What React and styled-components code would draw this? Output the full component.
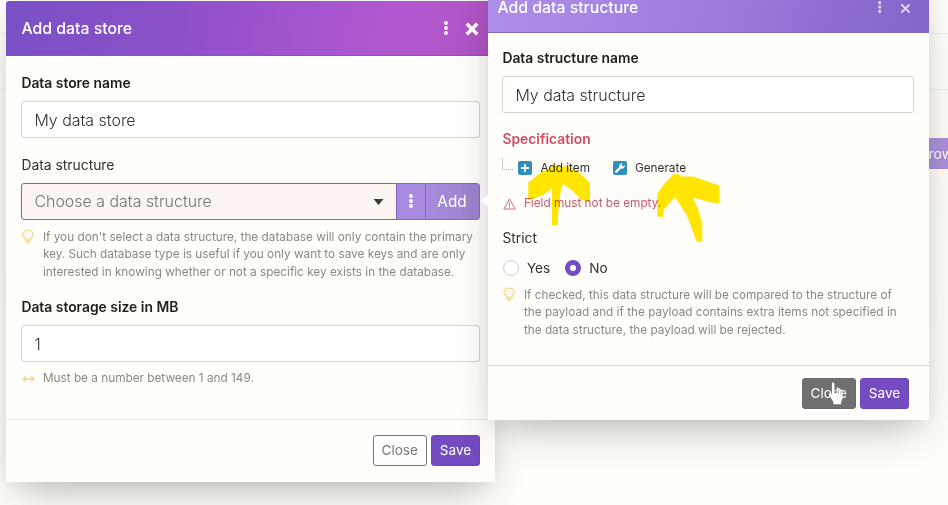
import React from "react";
import styled, { createGlobalStyle, css } from "styled-components";

const GlobalStyle = createGlobalStyle`
  * { box-sizing: border-box; }
  body { margin: 0; background: #fffefb; }
  body, button, input { font-family: Inter, "Liberation Sans", sans-serif; }
`;

const Desktop = styled.main`
  position: relative;
  width: 948px;
  height: 505px;
  overflow: hidden;
  background: #fffefb;
  color: #33312f;
`;

const Backdrop = styled.div`
  display: grid;
  grid-template-rows: 34px 56px 1fr;
  height: 100%;
`;

const BackdropBand = styled.div`
  border-bottom: 1px solid #efeeeb;
`;

const BackdropPage = styled.div`
  display: flex;
  justify-content: flex-end;
  align-items: flex-start;
  padding-top: 48px;
  background: linear-gradient(#fefbf8, #fffefb 390px);
`;

const BrowseButton = styled.button`
  width: 32px;
  height: 31px;
  padding: 0 0 0 12.5px;
  border: 0;
  background: #a98fd9;
  color: #fff;
  font-size: 14px;
  line-height: 31px;
  text-align: left;
`;

/* Dialogs float over the page like windows. */
const Dialog = styled.section`
  position: absolute;
  left: ${(p) => p.$x}px;
  top: ${(p) => p.$y}px;
  width: ${(p) => p.$w}px;
  height: ${(p) => p.$h}px;
  display: flex;
  flex-direction: column;
  border-radius: 3px 3px 0 0;
  background: #fffefb;
  box-shadow: 0 22px 40px -14px rgba(60, 56, 50, 0.3), 0 4px 24px rgba(60, 56, 50, 0.1);
`;

const DialogHeader = styled.header`
  flex: none;
  height: 55px;
  display: flex;
  align-items: center;
  gap: ${(p) => (p.$faded ? 18 : 14)}px;
  padding: ${(p) => (p.$faded ? "6px 18px 0 9.500px" : "1.500px 18px 0 15.500px")};
  border-radius: 3px 3px 0 0;
  border-bottom: 1px solid ${(p) => (p.$faded ? "#866ab8" : "#9150b8")};
  background: ${(p) =>
    p.$faded
      ? "linear-gradient(100deg, #ad8ee9 0%, #a080df 45%, #8263c8 100%)"
      : "linear-gradient(100deg, #7950c5 0%, #8c50c8 34%, #a554cf 62%, #b358cf 82%, #ae52c2 100%)"};
  color: ${(p) => (p.$faded ? "#e3d8f7" : "#fff")};
`;

const DialogTitle = styled.h2`
  flex: 1;
  margin: 0;
  color: #fff;
  font-size: 15.8px;
  font-weight: 500;
  line-height: 22px;
`;

const HeaderActions = styled.div`
  width: ${(p) => p.$w}px;
  display: flex;
  align-items: center;
  justify-content: space-between;
  padding-left: 3px;
  margin-right: ${(p) => p.$shift}px;
`;

const HeaderDots = styled.span`
  display: flex;
  margin-top: -2px;
`;

const DialogBody = styled.div`
  flex: 1;
  padding: ${(p) => p.$pad};
`;

const DialogFooter = styled.footer`
  flex: none;
  height: ${(p) => p.$h}px;
  display: flex;
  justify-content: flex-end;
  gap: 4px;
  padding: ${(p) => p.$pad};
  border-top: 1px solid ${(p) => p.$line};
`;

const Label = styled.div`
  height: 18px;
  margin-bottom: ${(p) => p.$gap ?? 9}px;
  color: ${(p) => (p.$error ? "#d14e63" : p.$strong ? "#22201e" : "#33312f")};
  font-size: 13.87px;
  font-weight: ${(p) => (p.$strong ? 600 : 400)};
  line-height: 18px;
`;

const fieldBox = css`
  height: 37px;
  font-size: 15.95px;
  font-weight: 300;
  line-height: 35px;
`;

const TextInput = styled.input`
  ${fieldBox}
  display: block;
  width: 100%;
  margin-bottom: ${(p) => p.$gap}px;
  padding: 1px 12px 0;
  border: 1px solid #d8d3cd;
  border-radius: 3px;
  background: #fff;
  color: #33312f;
  outline: none;
`;

const SelectGroup = styled.div`
  display: flex;
  margin-bottom: 9px;
`;

const SelectBox = styled.div`
  ${fieldBox}
  flex: 1;
  display: flex;
  align-items: center;
  justify-content: space-between;
  padding: 1px 12px 0 12px;
  border: 1.5px solid #8260ba;
  border-radius: 3px 0 0 3px;
  background: #fdf5f2;
  color: #77726e;
`;

const GroupButton = styled.button`
  height: 37px;
  width: ${(p) => p.$w}px;
  display: flex;
  align-items: center;
  justify-content: center;
  padding: 0;
  border: 1px solid #8868c6;
  border-left-width: ${(p) => (p.$last ? 1 : 0)}px;
  border-right-width: ${(p) => (p.$last ? 1 : 0)}px;
  border-radius: ${(p) => (p.$last ? "0 3px 3px 0" : 0)};
  background: ${(p) => (p.$last ? "linear-gradient(90deg, #a78bdd, #9c83cd)" : "#a88ade")};
  color: #fff;
  font-size: 15.3px;
`;

const Hint = styled.div`
  display: grid;
  grid-template-columns: ${(p) => p.$indent ?? 21.5}px 1fr;
  margin-bottom: ${(p) => p.$gap ?? 0}px;
  color: ${(p) => (p.$error ? "#c95a70" : "#8b8784")};
  font-size: 11.79px;
  line-height: 17.6px;
  white-space: nowrap;
`;

const HintIcon = styled.span`
  display: flex;
  padding: ${(p) => p.$pad};
`;

const tones = {
  primary: { fill: "#754bc2", border: "#6e46b8", text: "#fff" },
  outline: { fill: "#fffefd", border: "#7b7775", text: "#7b7775" },
  dark: { fill: "#706f72", border: "#6a696c", text: "#fff" },
};

const Button = styled.button`
  width: ${(p) => p.$w}px;
  height: 31px;
  padding: 0;
  border: 1px solid ${(p) => tones[p.$tone].border};
  border-radius: 3px;
  background: ${(p) => tones[p.$tone].fill};
  color: ${(p) => tones[p.$tone].text};
  font-size: 13.6px;
  line-height: 29px;
`;

const SpecRow = styled.div`
  display: flex;
  align-items: center;
  height: 20px;
  margin-bottom: 17px;
  font-size: 11.77px;
  color: #33312f;
`;

const TreeBranch = styled.span`
  width: 11px;
  height: 12px;
  margin: -9px 5px 0 0;
  border-left: 1px solid #cfcac6;
  border-bottom: 1px dotted #bbb6b1;
`;

const SpecAction = styled.span`
  display: flex;
  align-items: center;
  gap: 8px;
  margin-right: 23px;
`;

const RadioRow = styled.div`
  display: flex;
  align-items: center;
  height: 20px;
  margin-bottom: 9px;
  padding-left: 0.5px;
  font-size: 13.6px;
`;

const RadioDot = styled.span`
  width: 16px;
  height: 16px;
  margin: 0 8px 0 ${(p) => (p.$on ? 15 : 0)}px;
  border: ${(p) => (p.$on ? "5px solid #754bc2" : "1px solid #d3cfcb")};
  border-radius: 50%;
  background: #fff;
`;

const Overlay = styled.svg`
  position: absolute;
  left: ${(p) => p.$x}px;
  top: ${(p) => p.$y}px;
  ${(p) => p.$blend && "mix-blend-mode: multiply;"}
`;

/* Notch that ties the nested dialog to the "Add" button. */
const Notch = styled.span`
  position: absolute;
  left: -7px;
  top: 217px;
  border: 6px solid transparent;
  border-left-width: 0;
  border-right: 7px solid #fffefb;
`;

const DotsIcon = ({ size = 1 }) => (
  <svg width={4 * size} height={14 * size} viewBox="0 0 4 14" fill="currentColor">
    <circle cx="2" cy="2" r="1.9" />
    <circle cx="2" cy="7" r="1.9" />
    <circle cx="2" cy="12" r="1.9" />
  </svg>
);

const CrossIcon = ({ size, weight }) => (
  <svg width={size} height={size} viewBox="0 0 12 12" stroke="currentColor" strokeWidth={weight}>
    <path d="M1.500 1.500l9 9M10.500 1.500l-9 9" />
  </svg>
);

const BulbIcon = () => (
  <svg width="12" height="15" viewBox="0 0 12 15" fill="none">
    <path
      d="M6 1.100C3.100 1.100 1.100 3 1.100 5.500c0 2 1.500 3 2.300 4.900h5.200c.8-1.900 2.300-2.900 2.300-4.900C10.900 3 8.900 1.100 6 1.100Z"
      stroke="#f5e1a0"
      strokeWidth="1.900"
    />
    <path d="M3.600 5.700C3.600 4.400 4.500 3.600 5.700 3.500" stroke="#f5e1a0" />
    <path d="M3.600 10.300h4.800v2.300L7 14.400H5l-1.400-1.800Z" fill="#f5e1a0" />
  </svg>
);

const RangeIcon = () => (
  <svg width="13" height="8" viewBox="0 0 13 8" fill="none" stroke="#f4da8e" strokeWidth="1.600">
    <path d="M1.500 4h10M4 1.200L1.300 4L4 6.800M9 1.200L11.700 4L9 6.800" />
  </svg>
);

const WarningIcon = () => (
  <svg width="13" height="12" viewBox="0 0 13 12" fill="none" stroke="#cd6c7e" strokeLinejoin="round">
    <path d="M6.500 1L12.200 11H.8Z" />
    <path d="M6.500 4.300v3.500M6.500 8.600v1.200" />
  </svg>
);

const PlusBadge = () => (
  <svg width="14" height="14" viewBox="0 0 14 14">
    <rect width="14" height="14" rx="2" fill="#2f8fb8" />
    <path d="M7 3v8M3 7h8" stroke="#fff" strokeWidth="1.800" />
  </svg>
);

const WrenchBadge = () => (
  <svg width="14" height="14" viewBox="0 0 14 14">
    <rect width="14" height="14" rx="2" fill="#2f8fb8" />
    <path
      d="M11.700 4.300L9.900 5.600L8.400 4.100L9.700 2.200C8 1.800 6.100 3.200 6.300 5.300L6.400 6L2.300 9.900c-1 1 .7 2.700 1.700 1.700L8 7.600c2.500.6 4.300-1.300 3.700-3.300Z"
      fill="#fff"
    />
  </svg>
);

function DataStoreDialog() {
  return (
    <Dialog $x={6} $y={1} $w={489} $h={480.5}>
      <DialogHeader>
        <DialogTitle>Add data store</DialogTitle>
        <HeaderActions $w={38} $shift={-2}>
          <HeaderDots><DotsIcon /></HeaderDots>
          <CrossIcon size={14} weight={3} />
        </HeaderActions>
      </DialogHeader>
      <DialogBody $pad="18px 15.500px 0 15.400px">
        <Label $strong>Data store name</Label>
        <TextInput defaultValue="My data store" $gap={17.5} />
        <Label>Data structure</Label>
        <SelectGroup>
          <SelectBox>
            Choose a data structure
            <svg width="11" height="6" viewBox="0 0 10 6"><path d="M0 0h10L5 6Z" fill="#3b3835" /></svg>
          </SelectBox>
          <GroupButton $w={28}><DotsIcon /></GroupButton>
          <GroupButton $w={55} $last>Add</GroupButton>
        </SelectGroup>
        <Hint $gap={17}>
          <HintIcon $pad="0 0 0 1px"><BulbIcon /></HintIcon>
          <span>
            If you don't select a data structure, the database will only contain the primary
            <br />
            key. Such database type is useful if you only want to save keys and are only
            <br />
            interested in knowing whether or not a specific key exists in the database.
          </span>
        </Hint>
        <Label $strong>Data storage size in MB</Label>
        <TextInput defaultValue="1" $gap={8} />
        <Hint>
          <HintIcon $pad="5px 0 0 1px"><RangeIcon /></HintIcon>
          <span>Must be a number between 1 and 149.</span>
        </Hint>
      </DialogBody>
      <DialogFooter $h={63} $pad="15px 15px 0" $line="#eae6e2">
        <Button $tone="outline" $w={54.5}>Close</Button>
        <Button $tone="primary" $w={49}>Save</Button>
      </DialogFooter>
    </Dialog>
  );
}

function DataStructureDialog() {
  return (
    <Dialog $x={488} $y={-22} $w={441} $h={441.5}>
      <Notch />
      <DialogHeader $faded>
        <DialogTitle>Add data structure</DialogTitle>
        <HeaderActions $w={36} $shift={0}>
          <HeaderDots><DotsIcon size={0.86} /></HeaderDots>
          <CrossIcon size={11} weight={2.2} />
        </HeaderActions>
      </DialogHeader>
      <DialogBody $pad="16px 15px 0 14.400px">
        <Label $strong>Data structure name</Label>
        <TextInput defaultValue="My data structure" $gap={17} />
        <Label $strong $error $gap={10}>Specification</Label>
        <SpecRow>
          <TreeBranch />
          <SpecAction><PlusBadge />Add item</SpecAction>
          <SpecAction><WrenchBadge />Generate</SpecAction>
        </SpecRow>
        <Hint $error $gap={16}>
          <HintIcon $pad="3px 0 0 1px"><WarningIcon /></HintIcon>
          <span>Field must not be empty.</span>
        </Hint>
        <Label $gap={11}>Strict</Label>
        <RadioRow>
          <RadioDot />Yes
          <RadioDot $on />No
        </RadioRow>
        <Hint>
          <HintIcon $pad="0 0 0 1px"><BulbIcon /></HintIcon>
          <span>
            If checked, this data structure will be compared to the structure of
            <br />
            the payload and if the payload contains extra items not specified in
            <br />
            the data structure, the payload will be rejected.
          </span>
        </Hint>
      </DialogBody>
      <DialogFooter $h={55} $pad="12px 20px 0" $line="#d9d6d6">
        <Button $tone="dark" $w={54.5}>Close</Button>
        <Button $tone="primary" $w={49}>Save</Button>
      </DialogFooter>
    </Dialog>
  );
}

export default function App() {
  return (
    <Desktop>
      <GlobalStyle />
      <Backdrop>
        <BackdropBand />
        <BackdropBand />
        <BackdropPage>
          <BrowseButton>row</BrowseButton>
        </BackdropPage>
      </Backdrop>
      <DataStoreDialog />
      <DataStructureDialog />
      <Overlay $x={520} $y={160} $blend width="210" height="90" viewBox="520 160 210 90" fill="#ffe600">
        <path d="M528.300 182.500L541.500 172L550 168L553 165.700H559L562 167L566.500 165.700L578 171.500L590 183V201.500L581.500 200L573 191L563 184L560.500 192L558 215V225H552V188L543.500 195L528.300 200.500Z" />
        <path d="M657.300 194L664 184L673.300 174.300H679.500V176.500H693.300L706 181L719.300 185.500V203.300L710 202.300L692.700 197.300L698 209L702.300 223.300V241.700H696.700L686.700 215L675 197.300L663.300 210V216.700H657.300Z" />
      </Overlay>
      <Overlay $x={829} $y={382} width="15" height="23" viewBox="0 0 15 23">
        <path
          d="M5.400 11V2C5.400 0 2.900 0 2.900 2v11L2.300 12C1 10.400-.6 11.700.4 13.300l4 6.700v2.300h7.700V20l1.500-4V9c0-1.500-2-1.500-2-.1V7.500c0-1.600-2.100-1.600-2.100 0V6.800c0-1.600-2.100-1.600-2.100 0V11Z"
          fill="#fff"
        />
        <path d="M7.400 7v4.500M9.500 7.500V12M11.600 9v3" stroke="#706f72" strokeWidth=".5" />
      </Overlay>
    </Desktop>
  );
}
